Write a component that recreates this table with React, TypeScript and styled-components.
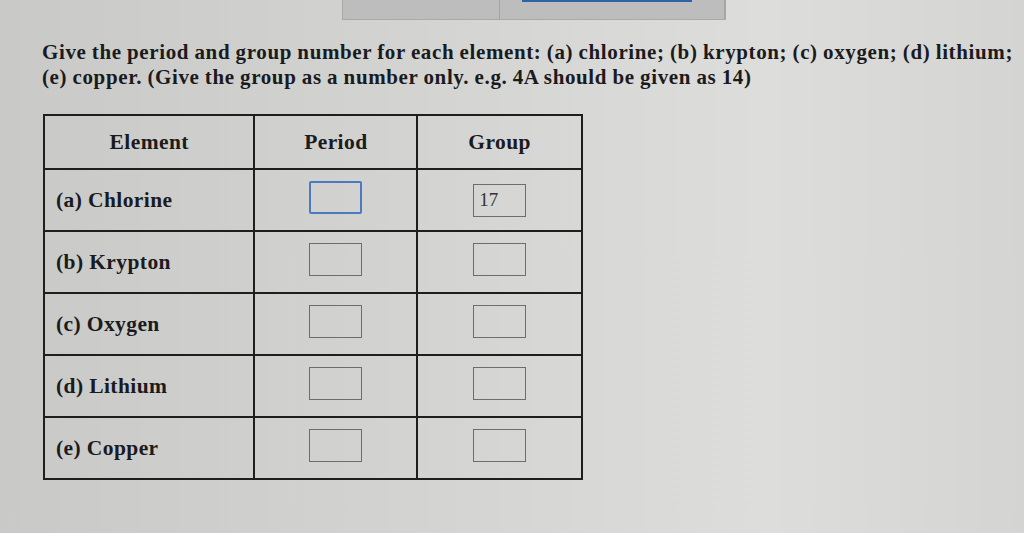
import React from "react";
import styled, { createGlobalStyle } from "styled-components";

const Global = createGlobalStyle`
  html, body { margin: 0; padding: 0; }
  body {
    width: 1024px; height: 533px; overflow: hidden;
    background: linear-gradient(90deg, #c9cac8 0%, #d3d4d2 40%, #dddedc 75%, #d4d5d3 100%);
    font-family: "Liberation Serif", "DejaVu Serif", serif;
    color: #1b1b1d;
  }
`;

const Page = styled.div`
  width: 1024px;
  height: 533px;
  display: flex;
  flex-direction: column;
`;

const TabStrip = styled.div`
  display: flex;
  margin-left: 342px;
  width: 384px;
  height: 20px;
  background: #bcbdbc;
  border: 1px solid #a8a9a8;
  border-top: none;
  box-sizing: border-box;
`;

const Tab = styled.div<{ $w: number; $active?: boolean }>`
  width: ${(p) => p.$w}px;
  height: 100%;
  border-right: 1px solid #a3a4a3;
  position: relative;
  &::before {
    content: "";
    display: ${(p) => (p.$active ? "block" : "none")};
    position: absolute;
    left: 22px; right: 32px; top: 0; height: 2px;
    background: #2f63a6;
  }
`;

const Question = styled.p`
  margin: 20px 0 0 42px;
  width: 980px;
  white-space: nowrap;
  font-size: 21px;
  font-weight: bold;
  line-height: 25px;
  letter-spacing: 0.62px;
  word-spacing: -0.5px;
`;

const Table = styled.table`
  margin: 24px 0 0 43px;
  border-collapse: collapse;
  width: 540px;
  font-size: 21.5px;
  font-weight: bold;
  letter-spacing: 0.4px;
  td, th { border: 2px solid #1e1e20; padding: 0; }
`;

const Head = styled.th<{ $w: number }>`
  width: ${(p) => p.$w}px;
  height: 52px;
  text-align: center;
  font-weight: bold;
  vertical-align: middle;
`;

const NameCell = styled.td`
  height: 60px;
  padding-left: 11px !important;
  text-align: left;
  vertical-align: middle;
`;

const InputCell = styled.td`
  text-align: center;
  vertical-align: middle;
`;

const Box = styled.div<{ $focus?: boolean }>`
  display: inline-flex;
  align-items: center;
  width: 53px;
  height: 33px;
  box-sizing: border-box;
  border: ${(p) => (p.$focus ? "2px solid #4a7bc0" : "1px solid #6c6d70")};
  border-radius: ${(p) => (p.$focus ? "2px" : "0")};
  padding-left: 5px;
  font-size: 19px;
  font-weight: normal;
  letter-spacing: 0;
  color: #333;
`;

const rows = [
  { name: "(a) Chlorine", period: "", group: "17", focus: true },
  { name: "(b) Krypton", period: "", group: "" },
  { name: "(c) Oxygen", period: "", group: "" },
  { name: "(d) Lithium", period: "", group: "" },
  { name: "(e) Copper", period: "", group: "" },
];

export default function App() {
  return (
    <Page>
      <Global />
      <TabStrip>
        <Tab $w={157} />
        <Tab $w={226} $active />
      </TabStrip>
      <Question>
        Give the period and group number for each element: (a) chlorine; (b) krypton; (c) oxygen; (d) lithium;
        <br />
        (e) copper. (Give the group as a number only. e.g. 4A should be given as 14)
      </Question>
      <Table>
        <thead>
          <tr>
            <Head $w={211}>Element</Head>
            <Head $w={163}>Period</Head>
            <Head $w={165}>Group</Head>
          </tr>
        </thead>
        <tbody>
          {rows.map((r) => (
            <tr key={r.name}>
              <NameCell>{r.name}</NameCell>
              <InputCell>
                <Box $focus={r.focus}>{r.period}</Box>
              </InputCell>
              <InputCell>
                <Box>{r.group}</Box>
              </InputCell>
            </tr>
          ))}
        </tbody>
      </Table>
    </Page>
  );
}
